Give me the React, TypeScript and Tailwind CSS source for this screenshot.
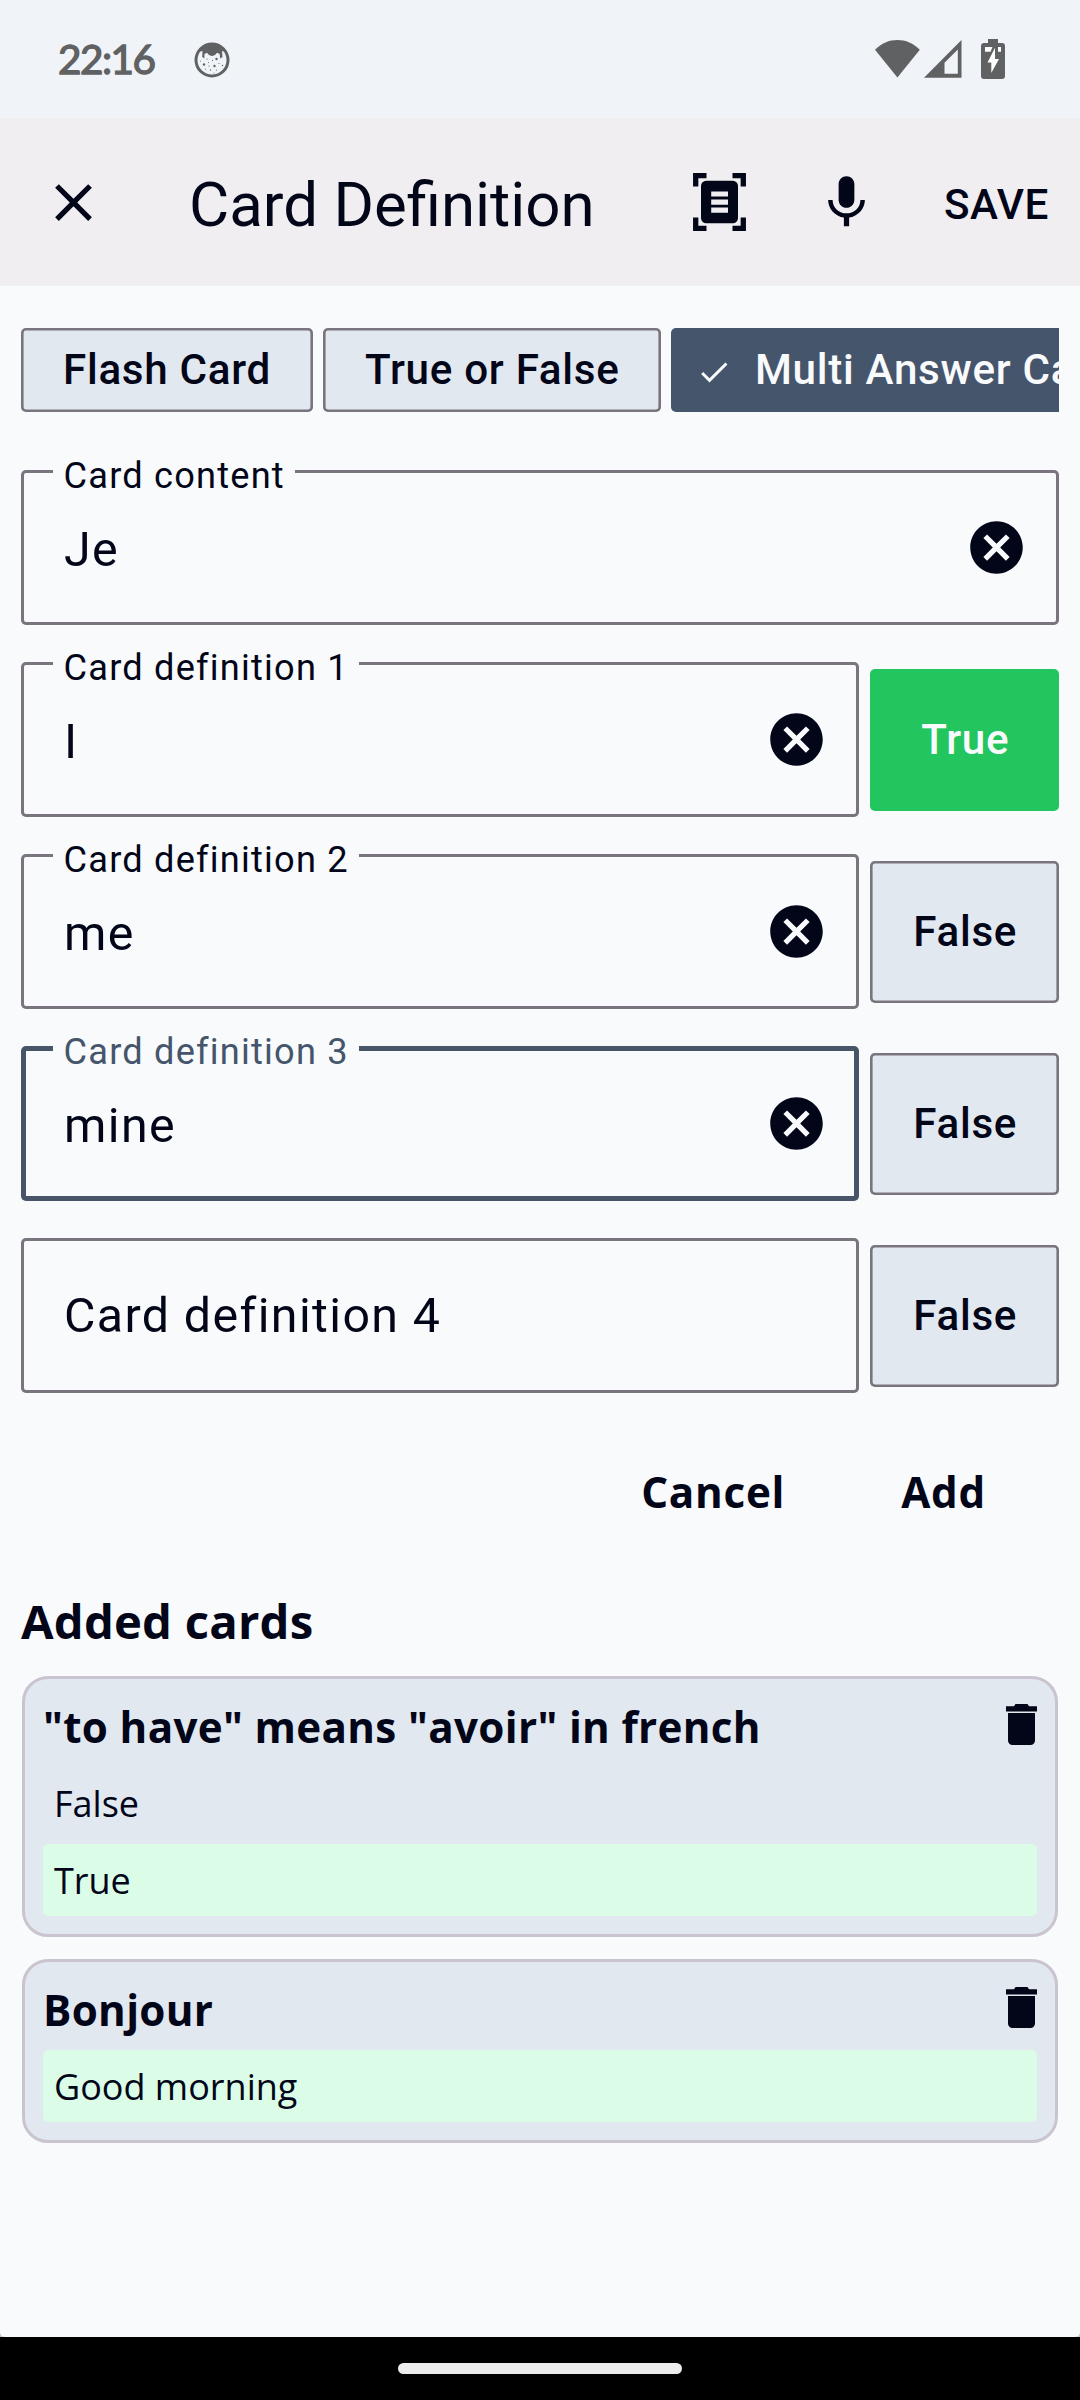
import React from "react";
import { MdCancel, MdCheck, MdClose, MdMic } from "react-icons/md";

function StatusBar() {
  return (
    <div className="flex h-[118px] items-center bg-[#f0f4f9] pr-[75px] pl-[58px] text-[#5f6162]">
      <span className="w-[136px] pb-[1px] font-['Lato',sans-serif] text-[40.5px] leading-[48px] tracking-[-1.5px] [-webkit-text-stroke:1.3px_#5f6162]">
        22:16
      </span>
      <svg className="mt-[2px] h-[36px] w-[36px]" viewBox="0 0 36 36">
        <circle cx="18" cy="18" r="16" fill="none" stroke="currentColor" strokeWidth="3" />
        <path
          d="M4 10C8 4 13 2 18 2s10 2 14 8l-4-1 .5 6-2.3 1.5-.5-4.5-2.7-1.2C21 13.5 19.500 14 18 14s-3-.5-5-3.200L10.500 12l-.2 4.500L8.200 15 8.500 9z"
          fill="currentColor"
        />
        <g fill="currentColor">
          <circle cx="10" cy="22.500" r="1.200" />
          <circle cx="20.500" cy="24" r="1.200" />
          <circle cx="22.500" cy="17" r="1.200" />
          <circle cx="15" cy="24" r=".6" />
          <circle cx="28.500" cy="23.500" r=".7" />
          <circle cx="18.500" cy="18.500" r=".6" />
          <circle cx="25" cy="21.500" r=".6" />
          <circle cx="13" cy="17" r=".6" />
          <circle cx="16.500" cy="28" r=".7" />
          <circle cx="22.500" cy="28" r=".6" />
          <circle cx="11.500" cy="27" r=".6" />
          <circle cx="6.500" cy="19" r=".5" />
          <circle cx="20" cy="31" r=".5" />
          <circle cx="14.500" cy="20.500" r=".5" />
        </g>
      </svg>
      <div className="ml-auto flex items-center">
        <svg className="h-[38px] w-[45px]" viewBox="0 0 45 38">
          <path d="M0 9.800C6.500 3.200 14 0 22.400 0S38.300 3.200 44.800 9.800L22.400 37.500z" fill="currentColor" />
        </svg>
        <svg className="ml-[4px] h-[38px] w-[38px]" viewBox="0 0 38 38">
          <path d="M37.500 0V37.800H0zM33.800 9.500L20.500 22.700V33.800H33.800z" fill="currentColor" fillRule="evenodd" />
        </svg>
        <svg className="ml-[19px] h-[40px] w-[24px]" viewBox="0 0 24 40">
          <path d="M7 0h10v4h4a3 3 0 0 1 3 3v30a3 3 0 0 1-3 3H3a3 3 0 0 1-3-3V7a3 3 0 0 1 3-3h4z" fill="currentColor" />
          <path d="M4 8h7.500l-2 4.800H4zM17 8h3v4.800h-3zM14 8.700V20h4L10.300 34V23.500H6.500z" fill="#fff" />
        </svg>
      </div>
    </div>
  );
}

function ScanIcon() {
  return (
    <svg className="h-[58px] w-[53px]" viewBox="0 0 53 58">
      <path
        d="M2.700 13.500V2.700h10.800M39.500 2.700h10.800v10.800M50.300 44.500v10.800H39.500M13.500 55.300H2.700V44.500"
        fill="none"
        stroke="currentColor"
        strokeWidth="5.300"
      />
      <rect x="8" y="7.800" width="37" height="42.500" rx="5.200" fill="currentColor" />
      <path d="M18.200 21h16.800M18.200 29.200h16.800M18.200 37.200h16.800" stroke="#f0eef1" strokeWidth="5.200" />
    </svg>
  );
}

function Header() {
  return (
    <header className="flex h-[168px] items-center bg-[#f0eef1] pl-[42px]">
      <MdClose className="size-[63px]" />
      <h1 className="ml-[84px] w-[504px] pt-[5px] text-[61.8px] leading-[72px] whitespace-nowrap">Card Definition</h1>
      <ScanIcon />
      <MdMic className="ml-[69px] size-[63px]" />
      <span className="ml-[66px] pt-[5px] text-[42.2px] leading-[50px] font-medium tracking-[0.5px]">SAVE</span>
    </header>
  );
}

const outlined = "bg-slate-200 shadow-[inset_0_0_0_2.6px_#79747e]";

function Chips() {
  const base =
    "flex h-[84px] shrink-0 items-center rounded-[5px] text-[42.2px] leading-[50px] font-medium whitespace-nowrap tracking-[0.7px]";
  return (
    <div className="flex gap-[10px] overflow-hidden">
      <div className={`${base} ${outlined} w-[292px] pl-[42px]`}>Flash Card</div>
      <div className={`${base} ${outlined} w-[338px] pl-[42px]`}>True or False</div>
      <div className={`${base} bg-slate-600 pr-[42px] pl-[25px] text-slate-50`}>
        <MdCheck className="mt-[3px] mr-[23px] size-[36px]" />
        Multi Answer Card
      </div>
    </div>
  );
}

type FieldProps = { label: string; value?: string; focused?: boolean };

function Field({ label, value, focused }: FieldProps) {
  return (
    <div
      className={`relative flex h-[155px] flex-1 items-center rounded-[5px] pr-[31px] pl-[43px] ${
        focused ? "shadow-[inset_0_0_0_5px_#475569]" : "shadow-[inset_0_0_0_3px_#79747e]"
      }`}
    >
      {value ? (
        <>
          <span
            className={`absolute top-[-14px] left-[32px] bg-slate-50 px-[10.5px] text-[36.2px] leading-[40px] tracking-[1.2px] ${
              focused ? "text-slate-600" : ""
            }`}
          >
            {label}
          </span>
          <span className="flex-1 pt-[4px] text-[48.3px] leading-[60px] tracking-[1.4px]">{value}</span>
          <MdCancel className="size-[63px]" />
        </>
      ) : (
        <span className="text-[48.3px] leading-[60px] tracking-[1.4px]">{label}</span>
      )}
    </div>
  );
}

function DefinitionRow({ correct, ...field }: FieldProps & { correct?: boolean }) {
  return (
    <div className="flex items-center gap-[11px]">
      <Field {...field} />
      <div
        className={`flex h-[142px] w-[189px] items-center justify-center rounded-[5px] pl-[1.5px] text-[42.2px] leading-[50px] font-medium tracking-[0.7px] ${
          correct ? "bg-[#22c55e] text-slate-50" : outlined
        }`}
      >
        {correct ? "True" : "False"}
      </div>
    </div>
  );
}

function TrashIcon() {
  return (
    <svg className="mt-[17px] h-[41px] w-[31px]" viewBox="0 0 31 41">
      <path
        d="M9.500 0h12L23 2.200h8v5.200H0V2.200h8zM2 9h27v27.500a4.500 4.500 0 0 1-4.500 4.500h-18A4.500 4.500 0 0 1 2 36.500z"
        fill="currentColor"
      />
    </svg>
  );
}

type CardProps = { title: string; answers: { text: string; correct?: boolean }[] };

function AddedCard({ title, answers }: CardProps) {
  return (
    <article className="mx-px rounded-[26px] border-[3px] border-[#cac4d0] bg-slate-200 px-[18px] pt-[8px] pb-[18px]">
      <div className="flex h-[80px] items-start justify-between">
        <h3 className="text-[42.2px] leading-[80px] font-bold tracking-[0.32px]">{title}</h3>
        <TrashIcon />
      </div>
      <div className="flex flex-col gap-[5px]">
        {answers.map((a) => (
          <div
            key={a.text}
            className={`h-[72px] rounded-[5px] pl-[11px] text-[36px] leading-[74px] ${a.correct ? "bg-green-100" : ""}`}
          >
            {a.text}
          </div>
        ))}
      </div>
    </article>
  );
}

const cards: CardProps[] = [
  { title: '"to have" means "avoir" in french', answers: [{ text: "False" }, { text: "True", correct: true }] },
  { title: "Bonjour", answers: [{ text: "Good morning", correct: true }] },
];

export default function App() {
  return (
    <div className="flex h-[2400px] w-[1080px] flex-col overflow-hidden bg-black font-['Roboto',sans-serif] text-slate-950">
      <StatusBar />
      <Header />
      <div className="flex-1 bg-[#c8ccd0]">
        <main className="h-full rounded-b-[5px] bg-slate-50 px-[21px] pt-[42px]">
          <Chips />
          <div className="mt-[58px] flex flex-col gap-[37px]">
            <div className="flex">
              <Field label="Card content" value="Je" />
            </div>
            <DefinitionRow label="Card definition 1" value="I" correct />
            <DefinitionRow label="Card definition 2" value="me" />
            <DefinitionRow label="Card definition 3" value="mine" focused />
            <DefinitionRow label="Card definition 4" />
          </div>
          <section className="font-['Open_Sans',sans-serif]">
            <div className="mt-[50px] flex h-24 items-center justify-end gap-[116px] pt-[2px] pr-[73px] text-[42.2px] font-bold tracking-[0.75px]">
              <span>Cancel</span>
              <span>Add</span>
            </div>
            <h2 className="mt-[50px] text-[47.25px] leading-[64px] font-bold tracking-[0.2px]">Added cards</h2>
            <div className="mt-[23px] flex flex-col gap-[22px]">
              {cards.map((c) => (
                <AddedCard key={c.title} {...c} />
              ))}
            </div>
          </section>
        </main>
      </div>
      <div className="flex h-[63px] justify-center pt-[26px]">
        <div className="h-[11px] w-[284px] rounded-full bg-[#ececec]" />
      </div>
    </div>
  );
}
